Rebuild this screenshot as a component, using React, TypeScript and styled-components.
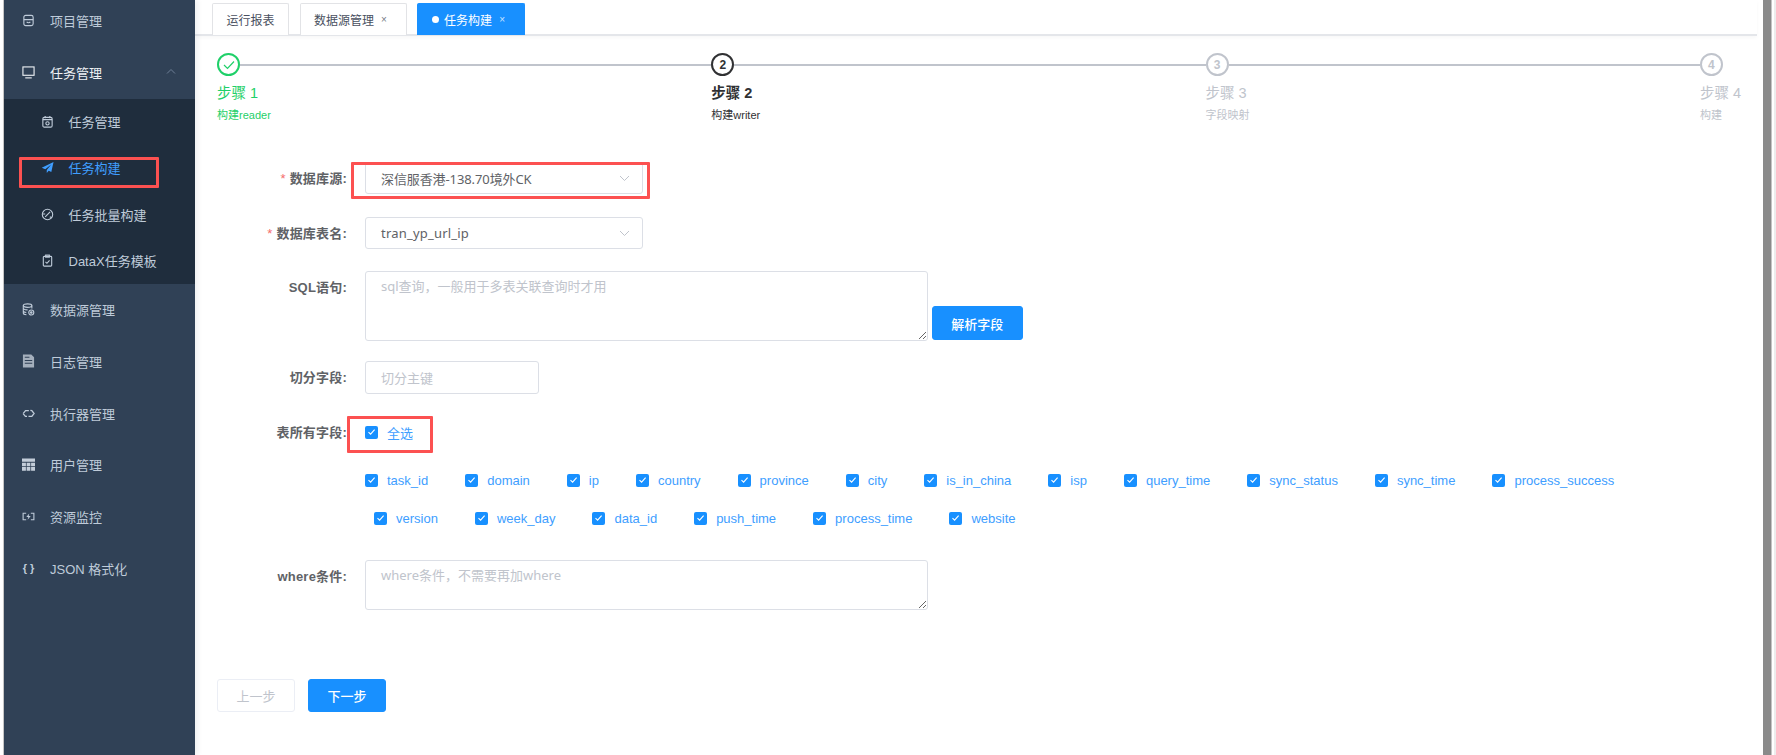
import React from "react";
import styled, { createGlobalStyle } from "styled-components";

const FONT = `"Liberation Sans", "Noto Sans CJK SC", sans-serif`;
const INPUT_FONT = `"Noto Sans", "Noto Sans CJK SC", sans-serif`;

const Global = createGlobalStyle`
  html, body { margin: 0; padding: 0; height: 755px; overflow: hidden; background: #fff; }
  body { font-family: ${FONT}; }
  #root { height: 755px; }
  * { box-sizing: border-box; }
`;

const Page = styled.div`
  display: flex;
  width: 1776px;
  height: 755px;
  overflow: hidden;
`;
const LeftEdge = styled.div`
  width: 4px;
  flex: none;
  border-right: 1px solid #c9c9c9;
  background: #fff;
`;
const Sidebar = styled.nav`
  width: 191px;
  flex: none;
  background: #304156;
  overflow: hidden;
  box-shadow: 2px 0 6px rgba(0, 21, 41, 0.08);
  position: relative;
`;
const MenuList = styled.div`
  margin-top: -5px;
`;
const MenuItem = styled.div<{ $open?: boolean }>`
  height: 51.8px;
  display: flex;
  align-items: center;
  padding: 0 19px 0 18px;
  gap: 15px;
  font-size: 13px;
  color: ${(p) => (p.$open ? "#eef1f5" : "#bfcbd9")};
  svg { flex: none; }
`;
const Chevron = styled.svg`
  margin-left: auto;
  margin-top: -4px;
`;
const SubMenu = styled.div`
  background: #1f2d3d;
`;
const SubItem = styled.div<{ $active?: boolean }>`
  position: relative;
  height: 46.25px;
  display: flex;
  align-items: center;
  padding-left: 37px;
  gap: 14.5px;
  font-size: 13px;
  color: ${(p) => (p.$active ? "#409eff" : "#bfcbd9")};
  svg { flex: none; }
`;
const JsonGlyph = styled.span`
  width: 13px;
  flex: none;
  font-size: 11px;
  font-weight: 700;
  white-space: nowrap;
  text-align: center;
`;
const Callout = styled.div<{ $l: number; $t: number; $w: number; $h: number }>`
  position: absolute;
  left: ${(p) => p.$l}px;
  top: ${(p) => p.$t}px;
  width: ${(p) => p.$w}px;
  height: ${(p) => p.$h}px;
  border: 3px solid #fc5151;
  border-radius: 1px;
  pointer-events: none;
`;

const Content = styled.main`
  flex: 1;
  min-width: 0;
  display: flex;
  flex-direction: column;
`;
const TabBar = styled.div`
  height: 36px;
  margin-right: 6px;
  padding: 3px 0 0 17px;
  display: flex;
  gap: 10.5px;
  border-bottom: 2px solid #e4e6ea;
  box-shadow: 0 2px 4px rgba(0, 21, 41, 0.03);
`;
const Tab = styled.div<{ $active?: boolean }>`
  height: 32px;
  padding: 0 13.5px;
  display: flex;
  align-items: center;
  font-size: 12px;
  border: 1px solid ${(p) => (p.$active ? "#1890ff" : "#e2e3e6")};
  border-bottom: 0;
  border-radius: 2px 2px 0 0;
  background: ${(p) => (p.$active ? "#1890ff" : "#fff")};
  color: ${(p) => (p.$active ? "#fff" : "#495060")};
`;
const TabDot = styled.span`
  width: 7.5px;
  height: 7.5px;
  flex: none;
  border-radius: 50%;
  background: #fff;
  margin-right: 5px;
`;
const TabClose = styled.span`
  width: 16px;
  margin-left: 2px;
  font-size: 10px;
  text-align: center;
  opacity: 0.75;
`;
const Main = styled.div`
  padding: 17px 22px 0;
`;
const Steps = styled.div`
  display: flex;
`;
const Step = styled.div<{ $last?: boolean; $tone: string }>`
  flex: ${(p) => (p.$last ? "0 0 41px" : "1 1 0")};
  color: ${(p) => p.$tone};
  white-space: nowrap;
`;
const StepHead = styled.div`
  display: flex;
  align-items: center;
  height: 23px;
`;
const StepCircle = styled.div`
  width: 23px;
  height: 23px;
  flex: none;
  border: 2px solid currentColor;
  border-radius: 50%;
  display: flex;
  align-items: center;
  justify-content: center;
  font-size: 12px;
  font-weight: 700;
`;
const StepLine = styled.div`
  flex: 1;
  height: 2px;
  background: #c0c4cc;
`;
const StepTitle = styled.div<{ $bold?: boolean }>`
  margin-top: 5px;
  font-size: 14.5px;
  line-height: 24px;
  font-weight: ${(p) => (p.$bold ? 700 : 400)};
`;
const StepDesc = styled.div`
  font-size: 11px;
  line-height: 20px;
`;

const Form = styled.div`
  margin-top: 37px;
`;
const Row = styled.div<{ $top?: number; $end?: boolean }>`
  display: flex;
  align-items: ${(p) => (p.$end ? "flex-end" : "flex-start")};
  margin-top: ${(p) => p.$top ?? 0}px;
  position: relative;
`;
const LabelCell = styled.div`
  align-self: flex-start;
  width: 130px;
  height: 32px;
  margin-right: 18px;
  flex: none;
  text-align: right;
  font-size: 13px;
  font-weight: 700;
  letter-spacing: 0.2px;
  line-height: 34px;
  color: #606266;
`;
const Star = styled.span`
  color: #f56c6c;
  font-weight: 400;
  margin-right: 4px;
`;
const SelectBox = styled.div`
  position: relative;
  width: 278px;
  height: 32px;
  padding: 0 12px 0 15px;
  display: flex;
  align-items: center;
  justify-content: space-between;
  border: 1px solid #dcdfe6;
  border-radius: 3px;
  font-family: ${INPUT_FONT};
  font-size: 13px;
  color: #606266;
  background: #fff;
`;
const SelectValue = styled.span<{ $spacing: number }>`
  letter-spacing: ${(p) => p.$spacing}px;
`;
const TextInput = styled.input`
  width: 174px;
  height: 33px;
  padding: 0 15px;
  border: 1px solid #dcdfe6;
  border-radius: 3px;
  outline: none;
  font-family: ${INPUT_FONT};
  font-size: 13px;
  color: #606266;
  &::placeholder { color: #c0c4cc; }
`;
const Area = styled.textarea<{ $h: number }>`
  display: block;
  width: 563px;
  height: ${(p) => p.$h}px;
  padding: 5px 15px;
  border: 1px solid #dcdfe6;
  border-radius: 3px;
  outline: none;
  font-family: ${INPUT_FONT};
  font-size: 13px;
  line-height: 1.5;
  color: #606266;
  &::placeholder { color: #c0c4cc; }
`;
const PrimaryButton = styled.button<{ $w: number; $h: number }>`
  width: ${(p) => p.$w}px;
  height: ${(p) => p.$h}px;
  padding: 0;
  border: 1px solid #1890ff;
  border-radius: 3px;
  background: #1890ff;
  color: #fff;
  font-family: ${FONT};
  font-size: 13px;
  font-weight: 500;
`;
const ParseButton = styled(PrimaryButton)`
  margin: 0 0 1px 4px;
`;
const GhostButton = styled.button`
  width: 78px;
  height: 33px;
  padding: 0;
  border: 1px solid #ebeef5;
  border-radius: 3px;
  background: #fff;
  color: #c0c4cc;
  font-family: ${FONT};
  font-size: 13px;
`;
const Checks = styled.div`
  margin-left: 148px;
  width: 1300px;
  display: flex;
  flex-wrap: wrap;
`;
const Check = styled.label`
  display: inline-flex;
  align-items: center;
  height: 38px;
  margin-right: 28px;
  font-size: 13px;
  color: #409eff;
  & + & { margin-left: 9px; }
`;
const SingleCheck = styled(Check)`
  height: 32px;
  margin-right: 0;
`;
const Tick = styled.span`
  width: 13px;
  height: 13px;
  flex: none;
  margin-right: 9px;
  border-radius: 2px;
  background: #1890ff;
  display: flex;
  align-items: center;
  justify-content: center;
`;
const Actions = styled.div`
  margin-top: 69px;
  display: flex;
  gap: 13px;
`;
const Scrollbar = styled.div`
  width: 13px;
  flex: none;
  display: flex;
`;
const ScrollThumb = styled.div`
  width: 9px;
  background: #8a8a8a;
  border-right: 1px solid #c4c4c4;
`;
const ScrollGap = styled.div`
  width: 2px;
  background: #fff;
`;
const ScrollTrack = styled.div`
  width: 2px;
  background: #ededed;
`;

type IconProps = { children: React.ReactNode };
const Ico = ({ children }: IconProps) => (
  <svg width="13" height="13" viewBox="0 0 14 14" fill="none" stroke="currentColor" strokeWidth="1.2">
    {children}
  </svg>
);

const icons: Record<string, React.ReactNode> = {
  project: (
    <Ico>
      <rect x="2" y="1.5" width="10" height="11" rx="2" />
      <path d="M2 6h10M5 8.5c1 1 3 1 4 0" />
    </Ico>
  ),
  monitor: (
    <Ico>
      <rect x="1" y="1" width="12" height="9" />
      <path d="M3.5 12.8h7" />
    </Ico>
  ),
  calendar: (
    <Ico>
      <rect x="2" y="2.5" width="10" height="10.5" rx="1.5" />
      <path d="M2 5h10M4.5 1v2.5M9.5 1v2.5" />
      <circle cx="7" cy="9" r="1.8" />
    </Ico>
  ),
  send: (
    <svg width="13" height="13" viewBox="0 0 14 14" fill="currentColor">
      <path d="M13.5 1 0.8 7.4l3.8 1.6L11 3.8 6.2 9.7v3.3l2.1-2.4 2.8 1.2z" />
    </svg>
  ),
  gauge: (
    <Ico>
      <circle cx="7" cy="7" r="5.6" />
      <path d="M4.5 9.5 9.8 4.2M2 6.5h2.5M9.5 9.5l2 1" />
    </Ico>
  ),
  clipboard: (
    <Ico>
      <rect x="2.5" y="2.5" width="9" height="10.5" rx="1" />
      <rect x="5" y="1.2" width="4" height="2.2" />
      <path d="M4.8 8.5 6.4 10 9.2 6.8" />
    </Ico>
  ),
  database: (
    <Ico>
      <ellipse cx="6" cy="2.8" rx="4.6" ry="1.9" />
      <path d="M1.4 2.8v8c0 1 1.6 1.8 3.4 1.9M10.6 2.8v3M1.4 5.5c0 1 2 1.9 4.6 1.9M1.4 8.3c0 1 1.5 1.7 3.2 1.9" />
      <circle cx="10" cy="10.2" r="2.7" />
      <circle cx="10" cy="10.2" r="0.8" fill="currentColor" />
    </Ico>
  ),
  doc: (
    <svg width="13" height="14" viewBox="0 0 14 15" fill="#a4afbc">
      <path fillRule="evenodd" d="M1 .5h9L13 3.5v11H1zM3 6.5v1h8v-1zM3 9.5v1h8v-1zM3 3v1h5V3z" />
    </svg>
  ),
  exec: (
    <svg width="13" height="13" viewBox="0 0 14 13" fill="none" stroke="currentColor" strokeWidth="1.4">
      <path d="M1.2 6.6 3.8 3.4H7.4M9 3.2l1.6.3 2.4 3-2.4 3H7M5.4 9.6H3.7L1.2 6.6" />
    </svg>
  ),
  table: (
    <svg width="13" height="13" viewBox="0 0 14 14" fill="#c3cdd9">
      <path d="M0 .5h14v3.5H0zM0 5h4.2v3.8H0zM5 5h4v3.8H5zM9.8 5H14v3.8H9.8zM0 9.6h4.2v4H0zM5 9.6h4v4H5zM9.8 9.6H14v4H9.8z" />
    </svg>
  ),
  resource: (
    <Ico>
      <path d="M4.5 3.5H1.2v7h3.3M9.5 3.5h3.3v7H9.5" />
      <path d="M7.8 3.8 4.6 7.6h2.2L6 10.4 9.4 6.4H7.2z" fill="currentColor" stroke="none" />
    </Ico>
  ),
};

const CheckMark = () => (
  <Tick>
    <svg width="9" height="8" viewBox="0 0 9 8" fill="none" stroke="#fff" strokeWidth="1.1">
      <path d="M1.5 4.2 3.6 6.2 7.6 1.6" />
    </svg>
  </Tick>
);

const DownArrow = () => (
  <svg width="11" height="7" viewBox="0 0 11 7" fill="none" stroke="#c0c4cc" strokeWidth="1">
    <path d="M1 1 5.5 5.5 10 1" />
  </svg>
);

const tabs = [
  { label: "运行报表" },
  { label: "数据源管理", close: true },
  { label: "任务构建", close: true, active: true },
];

const steps = [
  { n: "1", title: "步骤 1", desc: "构建reader", tone: "#1fd069", done: true },
  { n: "2", title: "步骤 2", desc: "构建writer", tone: "#303133", bold: true },
  { n: "3", title: "步骤 3", desc: "字段映射", tone: "#c0c4cc" },
  { n: "4", title: "步骤 4", desc: "构建", tone: "#c0c4cc" },
];

const fields = [
  "task_id", "domain", "ip", "country", "province", "city", "is_in_china", "isp", "query_time",
  "sync_status", "sync_time", "process_success", "version", "week_day", "data_id", "push_time",
  "process_time", "website",
];

const Required = () => <Star>*</Star>;

export default function App() {
  return (
    <Page>
      <Global />
      <LeftEdge />
      <Sidebar>
        <MenuList>
          <MenuItem>{icons.project}项目管理</MenuItem>
          <MenuItem $open>
            {icons.monitor}任务管理
            <Chevron width="10" height="6" viewBox="0 0 10 6" fill="none" stroke="#6d7f95" strokeWidth="1">
              <path d="M1 5.5 5 1.5 9 5.5" />
            </Chevron>
          </MenuItem>
          <SubMenu>
            <SubItem>{icons.calendar}任务管理</SubItem>
            <SubItem $active>
              {icons.send}任务构建
              <Callout $l={15} $t={12.5} $w={140} $h={31} />
            </SubItem>
            <SubItem>{icons.gauge}任务批量构建</SubItem>
            <SubItem>{icons.clipboard}DataX任务模板</SubItem>
          </SubMenu>
          <MenuItem>{icons.database}数据源管理</MenuItem>
          <MenuItem>{icons.doc}日志管理</MenuItem>
          <MenuItem>{icons.exec}执行器管理</MenuItem>
          <MenuItem>{icons.table}用户管理</MenuItem>
          <MenuItem>{icons.resource}资源监控</MenuItem>
          <MenuItem>
            <JsonGlyph>{"{ }"}</JsonGlyph>JSON 格式化
          </MenuItem>
        </MenuList>
      </Sidebar>
      <Content>
        <TabBar>
          {tabs.map((t) => (
            <Tab key={t.label} $active={t.active}>
              {t.active && <TabDot />}
              {t.label}
              {t.close && <TabClose>×</TabClose>}
            </Tab>
          ))}
        </TabBar>
        <Main>
          <Steps>
            {steps.map((s, i) => (
              <Step key={s.n} $tone={s.tone} $last={i === steps.length - 1}>
                <StepHead>
                  <StepCircle>
                    {s.done ? (
                      <svg width="12" height="10" viewBox="0 0 12 10" fill="none" stroke="currentColor" strokeWidth="1.2">
                        <path d="M1 5 4.5 8.5 11 1.5" />
                      </svg>
                    ) : (
                      s.n
                    )}
                  </StepCircle>
                  {i < steps.length - 1 && <StepLine />}
                </StepHead>
                <StepTitle $bold={s.bold}>{s.title}</StepTitle>
                <StepDesc>{s.desc}</StepDesc>
              </Step>
            ))}
          </Steps>
          <Form>
            <Row>
              <LabelCell><Required />数据库源:</LabelCell>
              <SelectBox>
                <SelectValue $spacing={-0.1}>深信服香港-138.70境外CK</SelectValue>
                <DownArrow />
                <Callout $l={-15} $t={-1} $w={299} $h={37} />
              </SelectBox>
            </Row>
            <Row $top={23}>
              <LabelCell><Required />数据库表名:</LabelCell>
              <SelectBox>
                <SelectValue $spacing={0.2}>tran_yp_url_ip</SelectValue>
                <DownArrow />
              </SelectBox>
            </Row>
            <Row $top={22} $end>
              <LabelCell>SQL语句:</LabelCell>
              <Area $h={70} placeholder={"sql查询\uFF0C一般用于多表关联查询时才用"} />
              <ParseButton $w={90.5} $h={34}>解析字段</ParseButton>
            </Row>
            <Row $top={20}>
              <LabelCell>切分字段:</LabelCell>
              <TextInput placeholder="切分主键" />
            </Row>
            <Row $top={22}>
              <LabelCell>表所有字段:</LabelCell>
              <SingleCheck>
                <CheckMark />全选
              </SingleCheck>
              <Callout $l={130} $t={0} $w={86} $h={37} />
            </Row>
            <Row $top={13}>
              <Checks>
                {fields.map((f) => (
                  <Check key={f}>
                    <CheckMark />{f}
                  </Check>
                ))}
              </Checks>
            </Row>
            <Row $top={23}>
              <LabelCell>where条件:</LabelCell>
              <Area $h={50} placeholder={"where条件\uFF0C不需要再加where"} />
            </Row>
            <Actions>
              <GhostButton>上一步</GhostButton>
              <PrimaryButton $w={78} $h={33}>下一步</PrimaryButton>
            </Actions>
          </Form>
        </Main>
      </Content>
      <Scrollbar>
        <ScrollThumb />
        <ScrollGap />
        <ScrollTrack />
      </Scrollbar>
    </Page>
  );
}
